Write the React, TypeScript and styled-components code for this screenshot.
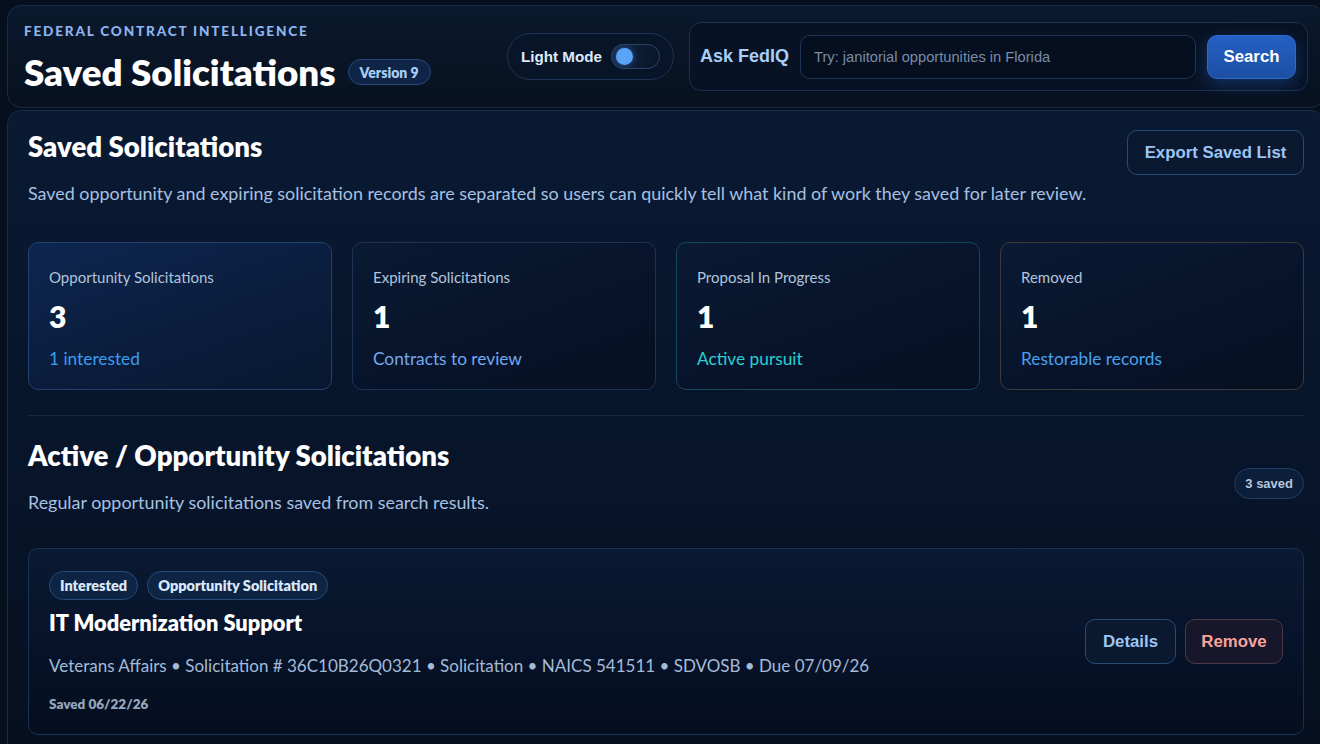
import React from "react";
import styled, { createGlobalStyle } from "styled-components";

const UI = `"Lato", "Noto Sans", sans-serif`;
const ARIAL = `"Liberation Sans", Arial, sans-serif`;

const Global = createGlobalStyle`
  html, body {
    margin: 0;
    padding: 0;
    background: #060f1e;
    overflow: hidden;
  }
  * { box-sizing: border-box; }
  body { font-family: ${UI}; color: #e6eefb; }
`;

const Page = styled.div`
  width: 1318px;
  margin: 5px 0 0 7px;
  display: flex;
  flex-direction: column;
  gap: 2px;
`;

const Header = styled.header`
  display: flex;
  align-items: center;
  justify-content: space-between;
  height: 103px;
  padding: 0 16px 0 16px;
  border: 1px solid #182a45;
  border-radius: 14px;
  background: linear-gradient(180deg, #0b192e 0%, #07111f 100%);
`;

const Brand = styled.div`
  display: flex;
  flex-direction: column;
  gap: 11px;
  margin-top: 4px;
`;

const Eyebrow = styled.div`
  font-family: ${UI};
  font-size: 13.6px;
  line-height: 16px;
  font-weight: 900;
  letter-spacing: 1.8px;
  color: #8db5ee;
  text-transform: uppercase;
`;

const TitleRow = styled.div`
  display: flex;
  align-items: center;
  gap: 12px;
`;

const PageTitle = styled.h1`
  margin: 0;
  font-family: ${UI};
  font-size: 36.7px;
  font-weight: 800;
  color: #ffffff;
  line-height: 44px;
`;

const Pill = styled.span`
  display: inline-flex;
  align-items: center;
  height: 26px;
  padding: 0 11px;
  border-radius: 999px;
  border: 1px solid #28497a;
  background: #0e2547;
  color: #a9cdf5;
  font-family: ${UI};
  font-size: 14px;
  font-weight: 800;
  white-space: nowrap;
`;

const Controls = styled.div`
  display: flex;
  align-items: center;
  gap: 15px;
`;

const ModeSwitch = styled.div`
  display: flex;
  align-items: center;
  gap: 9px;
  height: 47px;
  padding: 0 13px 0 13px;
  border: 1px solid #1e3456;
  border-radius: 24px;
  background: #081427;
  font-family: ${ARIAL};
  font-size: 15.2px;
  font-weight: 700;
  color: #dfeafa;
`;

const Track = styled.div`
  position: relative;
  width: 49px;
  height: 25px;
  border-radius: 13px;
  border: 1px solid #2a4468;
  background: linear-gradient(90deg, #102444, #0a1628);
`;

const Knob = styled.span`
  position: absolute;
  top: 3px;
  left: 4px;
  width: 17px;
  height: 17px;
  border-radius: 50%;
  background: #5aa4f7;
  box-shadow: 0 0 6px rgba(90, 164, 247, 0.5);
`;

const AskBox = styled.div`
  display: flex;
  align-items: center;
  gap: 11px;
  width: 619px;
  height: 69px;
  padding: 0 11px 0 10px;
  border: 1px solid #1b2f4e;
  border-radius: 12px;
  background: #071325;
`;

const AskLabel = styled.span`
  font-family: ${ARIAL};
  font-size: 18px;
  font-weight: 700;
  color: #a8cdf7;
  white-space: nowrap;
`;

const AskInput = styled.input`
  flex: 1;
  height: 44px;
  padding: 0 13px;
  border: 1px solid #1f3454;
  border-radius: 10px;
  background: #050f20;
  color: #dce8f8;
  font-family: ${ARIAL};
  font-size: 14.7px;
  outline: none;
  &::placeholder { color: #7a8ba4; }
`;

type Tone = "primary" | "ghost" | "danger";

const Button = styled.button<{ $tone?: Tone; $w?: number; $h?: number }>`
  height: ${(p) => p.$h ?? 45}px;
  width: ${(p) => (p.$w ? `${p.$w}px` : "auto")};
  padding: 0 10px;
  border-radius: 10px;
  font-family: ${ARIAL};
  font-size: 16.8px;
  font-weight: 700;
  cursor: pointer;
  white-space: nowrap;
  ${(p) =>
    p.$tone === "primary"
      ? `
    border: 1px solid #2d6ad0;
    background: linear-gradient(180deg, #2460c4 0%, #1d4fa3 100%);
    color: #ffffff;
    box-shadow: 0 6px 16px rgba(37, 99, 201, 0.35);
  `
      : p.$tone === "danger"
      ? `
    border: 1px solid #4a3a48;
    background: #17162a;
    color: #f6a59d;
  `
      : `
    border: 1px solid #284a78;
    background: #0a1830;
    color: #9cc6f4;
  `}
`;

const Panel = styled.main`
  padding: 19px 20px 20px 20px;
  border: 1px solid #182c4a;
  border-radius: 14px;
  background: linear-gradient(180deg, #0a1a33 0%, #071429 60%, #06101f 100%);
  min-height: 640px;
`;

const TopRow = styled.div`
  display: flex;
  justify-content: space-between;
  align-items: flex-start;
`;

const SectionTitle = styled.h2`
  margin: 0;
  font-family: ${UI};
  font-size: 27.6px;
  font-weight: 800;
  color: #ffffff;
  line-height: 33px;
`;

const Lead = styled.p`
  margin: 0;
  font-family: ${UI};
  font-size: 17.9px;
  color: #a6c0e1;
  line-height: 23px;
`;

const Intro = styled.div`
  display: flex;
  flex-direction: column;
  gap: 19px;
`;

const Stats = styled.div`
  display: grid;
  grid-template-columns: repeat(4, 1fr);
  gap: 20px;
  margin-top: 37px;
`;

type Accent = "blue" | "plain" | "teal" | "amber";

const StatCard = styled.div<{ $accent: Accent }>`
  height: 148px;
  padding: 24px 20px 0 20px;
  border-radius: 10px;
  border: 1px solid
    ${(p) =>
      p.$accent === "blue"
        ? "#22416f"
        : p.$accent === "teal"
        ? "#17485a"
        : p.$accent === "amber"
        ? "#3e3a3a"
        : "#1c3356"};
  background: ${(p) =>
    p.$accent === "blue"
      ? "linear-gradient(160deg, #0d2650 0%, #0a1d3c 55%, #081830 100%)"
      : "linear-gradient(160deg, #0a1a33 0%, #07132a 60%, #061022 100%)"};
  display: flex;
  flex-direction: column;
`;

const StatLabel = styled.div`
  font-family: ${UI};
  font-size: 15px;
  color: #b3c4dc;
  line-height: 20px;
`;

const StatValue = styled.div`
  margin-top: 11px;
  font-family: ${UI};
  font-size: 30px;
  font-weight: 800;
  color: #ffffff;
  line-height: 36px;
`;

const StatNote = styled.div<{ $color: string }>`
  margin-top: 14px;
  font-family: ${UI};
  font-size: 17.3px;
  color: ${(p) => p.$color};
  line-height: 22px;
`;

const Divider = styled.hr`
  margin: 25px 0 0 0;
  border: 0;
  border-top: 1px solid #162a46;
`;

const SectionHead = styled.div`
  display: flex;
  justify-content: space-between;
  align-items: center;
  margin-top: 23px;
`;

const SectionText = styled.div`
  display: flex;
  flex-direction: column;
  gap: 19px;
`;

const CountPill = styled(Pill)`
  height: 31px;
  padding: 0 10px;
  font-family: ${ARIAL};
  font-size: 13px;
  color: #b5c6da;
  background: #0c1e3a;
  border-color: #213d66;
  margin-top: 14px;
`;

const Record = styled.article`
  margin-top: 34px;
  display: flex;
  align-items: center;
  justify-content: space-between;
  padding: 22px 20px 22px 20px;
  border: 1px solid #1a3152;
  border-radius: 10px;
  background: linear-gradient(180deg, #0a1a32 0%, #07132a 50%, #050e1f 100%);
`;

const RecordBody = styled.div`
  display: flex;
  flex-direction: column;
`;

const Tags = styled.div`
  display: flex;
  gap: 9px;
`;

const Tag = styled(Pill)`
  height: 29px;
  padding: 0 10px;
  font-size: 14.5px;
  color: #dbe8fa;
  background: #0e2444;
  border-color: #284a78;
`;

const RecordTitle = styled.h3`
  margin: 9px 0 0 0;
  font-family: ${UI};
  font-size: 21.8px;
  font-weight: 800;
  color: #ffffff;
  line-height: 28px;
`;

const Meta = styled.div`
  margin-top: 18px;
  font-family: ${UI};
  font-size: 17px;
  color: #a4bbd8;
  line-height: 22px;
`;

const SavedOn = styled.div`
  margin-top: 19px;
  font-family: ${UI};
  font-size: 13.5px;
  font-weight: 800;
  color: #97a7bb;
  line-height: 16px;
`;

const Actions = styled.div`
  display: flex;
  gap: 9px;
`;

const stats: { label: string; value: number; note: string; color: string; accent: Accent }[] = [
  { label: "Opportunity Solicitations", value: 3, note: "1 interested", color: "#3c9cf0", accent: "blue" },
  { label: "Expiring Solicitations", value: 1, note: "Contracts to review", color: "#74a9ee", accent: "plain" },
  { label: "Proposal In Progress", value: 1, note: "Active pursuit", color: "#28d0d0", accent: "teal" },
  { label: "Removed", value: 1, note: "Restorable records", color: "#4aa2ef", accent: "amber" },
];

export default function App() {
  return (
    <>
      <Global />
      <Page>
        <Header>
          <Brand>
            <Eyebrow>Federal Contract Intelligence</Eyebrow>
            <TitleRow>
              <PageTitle>Saved Solicitations</PageTitle>
              <Pill>Version 9</Pill>
            </TitleRow>
          </Brand>
          <Controls>
            <ModeSwitch>
              Light Mode
              <Track>
                <Knob />
              </Track>
            </ModeSwitch>
            <AskBox>
              <AskLabel>Ask FedIQ</AskLabel>
              <AskInput placeholder="Try: janitorial opportunities in Florida" />
              <Button $tone="primary" $w={89} $h={44}>
                Search
              </Button>
            </AskBox>
          </Controls>
        </Header>

        <Panel>
          <TopRow>
            <Intro>
              <SectionTitle>Saved Solicitations</SectionTitle>
              <Lead>
                Saved opportunity and expiring solicitation records are separated so users can quickly tell
                what kind of work they saved for later review.
              </Lead>
            </Intro>
            <Button $w={177}>Export Saved List</Button>
          </TopRow>

          <Stats>
            {stats.map((s) => (
              <StatCard key={s.label} $accent={s.accent}>
                <StatLabel>{s.label}</StatLabel>
                <StatValue>{s.value}</StatValue>
                <StatNote $color={s.color}>{s.note}</StatNote>
              </StatCard>
            ))}
          </Stats>

          <Divider />

          <SectionHead>
            <SectionText>
              <SectionTitle>Active / Opportunity Solicitations</SectionTitle>
              <Lead>Regular opportunity solicitations saved from search results.</Lead>
            </SectionText>
            <CountPill>3 saved</CountPill>
          </SectionHead>

          <Record>
            <RecordBody>
              <Tags>
                <Tag>Interested</Tag>
                <Tag>Opportunity Solicitation</Tag>
              </Tags>
              <RecordTitle>IT Modernization Support</RecordTitle>
              <Meta>
                Veterans Affairs • Solicitation # 36C10B26Q0321 • Solicitation • NAICS 541511 • SDVOSB • Due
                07/09/26
              </Meta>
              <SavedOn>Saved 06/22/26</SavedOn>
            </RecordBody>
            <Actions>
              <Button $w={91}>Details</Button>
              <Button $tone="danger" $w={98}>
                Remove
              </Button>
            </Actions>
          </Record>
        </Panel>
      </Page>
    </>
  );
}
